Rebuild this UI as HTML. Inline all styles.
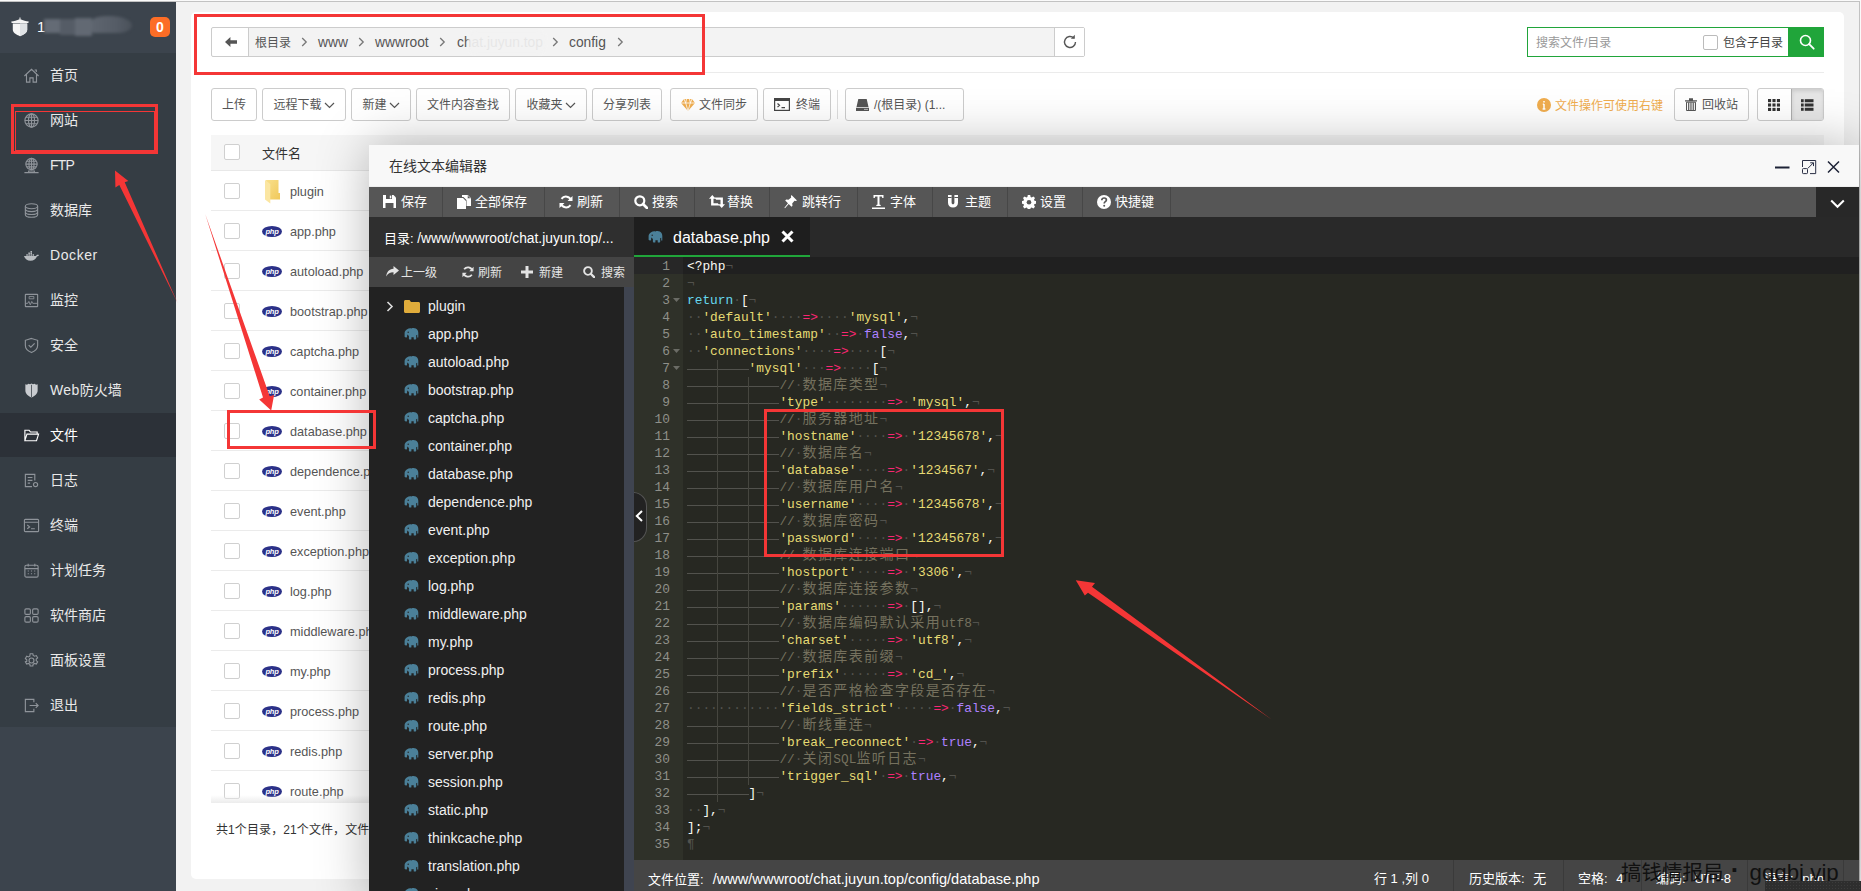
<!DOCTYPE html>
<html lang="zh-CN">
<head>
<meta charset="utf-8">
<title>文件管理</title>
<style>

*{box-sizing:border-box;margin:0;padding:0}
html,body{width:1861px;height:891px;overflow:hidden}
body{position:relative;background:#f2f2f2;font-family:"Liberation Sans","Noto Sans CJK SC",sans-serif;font-size:12px;color:#555;line-height:1}
.abs{position:absolute}
svg{display:block}
#topline{left:0;top:0;width:1861px;height:2px;background:linear-gradient(#fafafa 0,#fafafa 50%,#c2c2c2 50%,#c2c2c2 100%)}
#rightline{left:1859px;top:1px;width:2px;height:890px;background:linear-gradient(90deg,#c2c2c2 0,#c2c2c2 50%,#fafafa 50%,#fafafa 100%)}
/* sidebar */
#side{left:0;top:2px;width:176px;height:889px;background:#3c444d}
#side .hd{position:absolute;left:0;top:0;width:176px;height:50px}
#side .menu{position:absolute;left:0;top:50px;width:176px;height:675px;background:linear-gradient(transparent 1px,#353d44 1px)}
#side .mi{position:relative;height:45px;color:#e9e9e9;font-size:14px}
#side .mi.act{background:linear-gradient(transparent 1px,#2c3138 1px);color:#fff}
#side .mi span{position:absolute;left:50px;top:15px;line-height:17px;white-space:nowrap}
#side .mi svg{position:absolute;left:23px;top:14.500px;width:17px;height:17px;fill:none;stroke:#8f949a;stroke-width:1.2}
#side .mi.act svg{stroke:#fff}
.badge{left:150px;top:15px;width:20px;height:20px;border-radius:5px;background:#fc6d26;color:#fff;font-weight:bold;font-size:14px;text-align:center;line-height:20px}
/* main panel */
#panel{left:191px;top:12px;width:1653px;height:867px;background:#fff;border-radius:5px}
.pathbar{left:211px;top:27px;width:874px;height:30px;border:1px solid #ccc;border-radius:2px;background:#f3f3f3}
.pathbar .back{position:absolute;left:0;top:0;width:37px;height:28px;background:#fff;border-right:1px solid #ccc;border-radius:2px 0 0 2px}
.pathbar .refresh{position:absolute;right:0;top:0;width:30px;height:28px;background:#fff;border-left:1px solid #ccc}
.crumb{position:absolute;top:0;height:28px;line-height:30px;font-size:13.8px;color:#555;white-space:nowrap}
.crumb.cj{font-size:12px}
.sep{position:absolute;top:9px;width:7px;height:10px}
.btn{position:absolute;top:88px;height:33px;border:1px solid #ccc;border-radius:3px;background:#fff;color:#555;font-size:12px;line-height:33px;text-align:center;white-space:nowrap}
.btn svg{display:inline-block;vertical-align:middle}
.search{left:1527px;top:27px;width:297px;height:30px;border:1px solid #20a53a;background:#fff}
.search .ph{position:absolute;left:8px;top:0;line-height:30px;color:#999;font-size:12px}
.search .cb{position:absolute;left:175px;top:7px;width:15px;height:15px;border:1px solid #bbb;border-radius:2px;background:#fff}
.search .lb{position:absolute;left:195px;top:0;line-height:30px;color:#444;font-size:12px}
.search .go{position:absolute;right:-1px;top:-1px;width:36px;height:30px;background:#20a53a}
.hline{left:211px;top:72px;width:1613px;height:1px;background:#ebebeb}
/* file table */
.thead{left:211px;top:135px;width:1613px;height:36px;background:#f6f6f6;border-bottom:1px solid #e8e8e8}
.chk{position:absolute;left:13px;width:16px;height:16px;border:1px solid #d0d0d0;border-radius:2px;background:#fff}
.row{position:absolute;left:211px;width:1613px;height:40px;border-bottom:1px solid #ebebeb}
.row .chk{top:12px}
.row .nm{position:absolute;left:79px;top:0;line-height:42px;font-size:12.7px;color:#555;white-space:nowrap}
.row svg{position:absolute;left:51px}


#dlg{left:369px;top:145px;width:1490px;height:760px;background:#272822;box-shadow:1px 1px 50px rgba(0,0,0,.3)}
#dlg .title{position:absolute;left:0;top:0;width:1490px;height:42px;background:#f8f8f8;border-bottom:1px solid #eee;color:#333;font-size:14px;line-height:42px;padding-left:20px}
#dlg .tb{position:absolute;left:0;top:42px;width:1490px;height:30px;background:#282828}
#dlg .tb .in{position:absolute;left:0;top:0;width:1447px;height:30px;background:#565656}
.tbi{position:absolute;top:0;height:30px;border-right:1px solid #474747;color:#fff;font-size:13px;line-height:30px;white-space:nowrap}
.tbi svg{position:absolute;top:8px;fill:#fff}
.tbi span{position:absolute;top:0}
#tree{left:0;top:72px;width:265px;height:700px;background:#222}
#tree .dir{position:absolute;left:0;top:0;width:265px;height:40px;background:#2f2f2f;color:#fff;font-size:13px;line-height:43px;padding-left:15px;white-space:nowrap}
#tree .tt{position:absolute;left:0;top:40px;width:265px;height:30px;background:#444;color:#e4e4e4;font-size:12px;line-height:32px}
#tree .tt span{position:absolute;top:0}
#tree .tt svg{position:absolute;fill:#e4e4e4}
#tree .sb{position:absolute;left:255px;top:70px;width:10px;height:640px;background:#3f4450}
.ti{position:absolute;left:0;width:255px;height:28px;color:#f0f0f0;font-size:14px;line-height:28px;white-space:nowrap}
.ti span{position:absolute;left:59px;top:0}
.ti svg{position:absolute;left:35px;top:7px}
#tabs{left:265px;top:72px;width:1225px;height:40px;background:#292929}
#tabs .tab{position:absolute;left:0;top:0;width:176px;height:40px;background:#1e1e1e;border-bottom:2px solid #20a53a;color:#fff;font-size:16px;line-height:41px}
#code{left:265px;top:112px;width:1225px;height:603px;background:#272822;overflow:hidden;font-family:"Liberation Mono","Noto Sans CJK SC",monospace;font-size:12.8312px;line-height:17px;color:#f8f8f2}
#code .gut{position:absolute;left:0;top:0;width:49px;height:603px;background:#2f3129}
#code .al{position:absolute;left:0;top:0;width:1225px;height:17px;background:#202020}
#code .gal{position:absolute;left:0;top:0;width:49px;height:17px;background:#272727}
.ln{margin-top:1px;position:absolute;left:0;width:36px;text-align:right;color:#8f908a;height:17px;white-space:pre}
.fold{position:absolute;left:39px;width:7px;height:4px}
.cl{margin-top:1px;position:absolute;left:53px;height:17px;white-space:pre}
.cl i{font-style:normal;color:#52524d}
.cl .s{color:#e6db74}.cl .k{color:#f92672}.cl .r{color:#66d9ef}.cl .b{color:#ae81ff}.cl .c{color:#75715e}
.cl .cj{font-size:14px;letter-spacing:1.4px;color:#75715e}
.cl u{text-decoration:none;display:inline-block;height:17px;vertical-align:top;background:linear-gradient(#52524d,#52524d) 0 9px/100% 1px no-repeat}
.cl u.g{box-shadow:inset -1px 0 0 #46463f}
.cl b{font-weight:normal;display:inline-block;height:17px;vertical-align:top;color:#52524d}
.cl b.g{box-shadow:inset -1px 0 0 #46463f}
#status{left:265px;top:715px;width:1225px;height:40px;background:#454545;color:#fff;font-size:13px;line-height:38px;white-space:nowrap}
#status .it{position:absolute;top:0;height:31px}
#status .sp{position:absolute;top:0;width:1px;height:31px;background:#3a3a3a}

</style>
</head>
<body>
<div class="abs" id="panel"></div>
<div class="abs pathbar">
<div class="back"><svg class="abs" style="left:12.500px;top:9px" width="12.500" height="10" viewBox="0 0 15 12"><path d="M0 6l6.500-6v4H14.500v4H6.500v4z" fill="#555"/></svg></div>
<div class="crumb cj" style="left:43px">根目录</div>
<svg class="sep" style="left:89px" viewBox="0 0 7 10"><path d="M1.200 1l4 4-4 4" fill="none" stroke="#777" stroke-width="1.300"/></svg>
<div class="crumb " style="left:106px">www</div>
<svg class="sep" style="left:146px" viewBox="0 0 7 10"><path d="M1.200 1l4 4-4 4" fill="none" stroke="#777" stroke-width="1.300"/></svg>
<div class="crumb " style="left:163px">wwwroot</div>
<svg class="sep" style="left:227px" viewBox="0 0 7 10"><path d="M1.200 1l4 4-4 4" fill="none" stroke="#777" stroke-width="1.300"/></svg>
<div class="crumb " style="left:245px">chat.juyun.top</div>
<div class="abs" style="left:258px;top:5px;width:74px;height:19px;background:#f3f3f3;opacity:.92;border-radius:6px;box-shadow:0 0 3px 2px #f3f3f3"></div>
<svg class="sep" style="left:340px" viewBox="0 0 7 10"><path d="M1.200 1l4 4-4 4" fill="none" stroke="#777" stroke-width="1.300"/></svg>
<div class="crumb " style="left:357px">config</div>
<svg class="sep" style="left:405px" viewBox="0 0 7 10"><path d="M1.200 1l4 4-4 4" fill="none" stroke="#777" stroke-width="1.300"/></svg>
<div class="refresh"><svg class="abs" style="left:7px;top:6px" width="16" height="16" viewBox="0 0 16 16"><path d="M13.500 8a5.500 5.500 0 1 1-1.700-4" fill="none" stroke="#555" stroke-width="1.400"/><path d="M12.800 .8v4h-4z" fill="#555"/></svg></div>
</div>
<div class="abs search"><div class="ph">搜索文件/目录</div><div class="cb"></div><div class="lb">包含子目录</div><div class="go"><svg class="abs" style="left:11px;top:7px" width="16" height="16" viewBox="0 0 16 16"><circle cx="6.500" cy="6.500" r="5" fill="none" stroke="#fff" stroke-width="1.600"/><path d="M10.200 10.200l4.500 4.500" stroke="#fff" stroke-width="1.800" stroke-linecap="round"/></svg></div></div>
<div class="abs hline"></div>
<div class="btn" style="left:211px;width:46px;">上传</div>
<div class="btn" style="left:262px;width:84px;">远程下载<svg width="11" height="7" viewBox="0 0 11 7" style="margin-left:2px"><path d="M1 1l4.500 4.500L10 1" fill="none" stroke="#555" stroke-width="1.200"/></svg></div>
<div class="btn" style="left:351px;width:60px;">新建<svg width="11" height="7" viewBox="0 0 11 7" style="margin-left:2px"><path d="M1 1l4.500 4.500L10 1" fill="none" stroke="#555" stroke-width="1.200"/></svg></div>
<div class="btn" style="left:416px;width:94px;">文件内容查找</div>
<div class="btn" style="left:515px;width:72px;">收藏夹<svg width="11" height="7" viewBox="0 0 11 7" style="margin-left:2px"><path d="M1 1l4.500 4.500L10 1" fill="none" stroke="#555" stroke-width="1.200"/></svg></div>
<div class="btn" style="left:592px;width:70px;">分享列表</div>
<div class="btn" style="left:670px;width:88px;"><svg width="14" height="12" viewBox="0 0 14 12" style="margin-right:4px;margin-top:-2px"><path d="M3 0h8l3 4-7 8-7-8z" fill="#f0ad4e"/><path d="M0 4h14M3 0l1.700 4L7 12l2.300-8L11 0M5.500 0L4.700 4M8.500 0l.8 4" stroke="#fff" stroke-width=".8" fill="none"/></svg>文件同步</div>
<div class="btn" style="left:763px;width:68px;"><svg width="16" height="13" viewBox="0 0 16 13" style="margin-right:6px;margin-top:-2px"><rect x=".6" y=".6" width="14.800" height="11.800" fill="none" stroke="#444" stroke-width="1.200"/><path d="M.6 0h14.800v3H.6z" fill="#444"/><path d="M3.500 5.500l2 1.800-2 1.800M7.500 9.700h3.500" fill="none" stroke="#444" stroke-width="1.200"/></svg>终端</div>
<div class="abs" style="left:837px;top:90px;width:1px;height:29px;background:#ddd"></div>
<div class="btn" style="left:845px;width:119px;text-align:left;padding-left:10px"><svg width="13" height="12" viewBox="0 0 13 12" style="margin-right:5px;margin-top:-2px"><path d="M2.300 0h8.400l1.800 8H.5zM0 8.800h13V12H0z" fill="#555"/><circle cx="9" cy="10.400" r=".6" fill="#fff"/><circle cx="11" cy="10.400" r=".6" fill="#fff"/></svg>/(根目录) (1...</div>
<svg class="abs" style="left:1537px;top:98px" width="14" height="14" viewBox="0 0 14 14"><circle cx="7" cy="7" r="7" fill="#f0ad4e"/><path d="M7 3v1.600M7 6v5M5.800 6.200H7M5.600 11h2.800" stroke="#fff" stroke-width="1.500"/></svg>
<div class="abs" style="left:1555px;top:98px;line-height:17px;font-size:12px;color:#f0ad4e;white-space:nowrap">文件操作可使用右键</div>
<div class="btn" style="left:1674px;width:75px;"><svg width="12" height="13" viewBox="0 0 12 13" style="margin-right:5px;margin-top:-3px"><path d="M0 2.200h12v1.200H0zM4 .3h4v1.900H4z" fill="#555"/><path d="M1.500 4.200h9v8.300h-9z" fill="none" stroke="#555" stroke-width="1"/><path d="M3.500 4.500v7.500M5.200 4.500v7.500M6.900 4.500v7.500M8.600 4.500v7.500" stroke="#555" stroke-width=".9"/></svg>回收站</div>
<div class="btn" style="left:1757px;width:67px;overflow:hidden"><div class="abs" style="left:33px;top:0;width:33px;height:31px;background:#e6e6e6;border-left:1px solid #adadad;box-shadow:inset 0 2px 4px rgba(0,0,0,.12)"></div><svg class="abs" style="left:10px;top:10px" width="12" height="12" viewBox="0 0 13 13" fill="#333"><rect x="0" y="0" width="3.400" height="3.400"/><rect x="4.800" y="0" width="3.400" height="3.400"/><rect x="9.600" y="0" width="3.400" height="3.400"/><rect x="0" y="4.800" width="3.400" height="3.400"/><rect x="4.800" y="4.800" width="3.400" height="3.400"/><rect x="9.600" y="4.800" width="3.400" height="3.400"/><rect x="0" y="9.600" width="3.400" height="3.400"/><rect x="4.800" y="9.600" width="3.400" height="3.400"/><rect x="9.600" y="9.600" width="3.400" height="3.400"/></svg><svg class="abs" style="left:43px;top:10px" width="12.500" height="12" viewBox="0 0 14 13" fill="#333"><rect x="0" y="0" width="3" height="3.400"/><rect x="4.200" y="0" width="9.800" height="3.400"/><rect x="0" y="4.800" width="3" height="3.400"/><rect x="4.200" y="4.800" width="9.800" height="3.400"/><rect x="0" y="9.600" width="3" height="3.400"/><rect x="4.200" y="9.600" width="9.800" height="3.400"/></svg></div>
<div class="abs thead"><div class="chk" style="top:9px"></div><div class="abs" style="left:51px;top:0;line-height:37px;font-size:13px;color:#333">文件名</div></div>
<div class="abs" style="left:0;top:171px;width:1861px;height:632px;overflow:hidden">
<div class="row" style="top:0px"><div class="chk"></div><svg style="top:9px;left:53.500px" width="16" height="24" viewBox="0 0 16 24"><defs><linearGradient id="fg" x1="0" y1="0" x2="1" y2="1"><stop offset="0" stop-color="#f9e08c"/><stop offset="1" stop-color="#f0c85a"/></linearGradient></defs><path d="M1 0h12.500v13H15v6.600H4z" fill="url(#fg)"/><path d="M0 0l5.300 3.900v19.600L0 19.600z" fill="#fbe6a2"/></svg><div class="nm">plugin</div></div>
<div class="row" style="top:40px"><div class="chk"></div><svg style="top:15px" width="20" height="11" viewBox="0 0 20 11"><ellipse cx="10" cy="5.500" rx="10" ry="5.500" fill="#2b3188"/><text x="10" y="8" text-anchor="middle" font-family="Liberation Sans,sans-serif" font-style="italic" font-weight="bold" font-size="7.500" fill="#fff" letter-spacing="-.3">php</text></svg><div class="nm">app.php</div></div>
<div class="row" style="top:80px"><div class="chk"></div><svg style="top:15px" width="20" height="11" viewBox="0 0 20 11"><ellipse cx="10" cy="5.500" rx="10" ry="5.500" fill="#2b3188"/><text x="10" y="8" text-anchor="middle" font-family="Liberation Sans,sans-serif" font-style="italic" font-weight="bold" font-size="7.500" fill="#fff" letter-spacing="-.3">php</text></svg><div class="nm">autoload.php</div></div>
<div class="row" style="top:120px"><div class="chk"></div><svg style="top:15px" width="20" height="11" viewBox="0 0 20 11"><ellipse cx="10" cy="5.500" rx="10" ry="5.500" fill="#2b3188"/><text x="10" y="8" text-anchor="middle" font-family="Liberation Sans,sans-serif" font-style="italic" font-weight="bold" font-size="7.500" fill="#fff" letter-spacing="-.3">php</text></svg><div class="nm">bootstrap.php</div></div>
<div class="row" style="top:160px"><div class="chk"></div><svg style="top:15px" width="20" height="11" viewBox="0 0 20 11"><ellipse cx="10" cy="5.500" rx="10" ry="5.500" fill="#2b3188"/><text x="10" y="8" text-anchor="middle" font-family="Liberation Sans,sans-serif" font-style="italic" font-weight="bold" font-size="7.500" fill="#fff" letter-spacing="-.3">php</text></svg><div class="nm">captcha.php</div></div>
<div class="row" style="top:200px"><div class="chk"></div><svg style="top:15px" width="20" height="11" viewBox="0 0 20 11"><ellipse cx="10" cy="5.500" rx="10" ry="5.500" fill="#2b3188"/><text x="10" y="8" text-anchor="middle" font-family="Liberation Sans,sans-serif" font-style="italic" font-weight="bold" font-size="7.500" fill="#fff" letter-spacing="-.3">php</text></svg><div class="nm">container.php</div></div>
<div class="row" style="top:240px"><div class="chk"></div><svg style="top:15px" width="20" height="11" viewBox="0 0 20 11"><ellipse cx="10" cy="5.500" rx="10" ry="5.500" fill="#2b3188"/><text x="10" y="8" text-anchor="middle" font-family="Liberation Sans,sans-serif" font-style="italic" font-weight="bold" font-size="7.500" fill="#fff" letter-spacing="-.3">php</text></svg><div class="nm">database.php</div></div>
<div class="row" style="top:280px"><div class="chk"></div><svg style="top:15px" width="20" height="11" viewBox="0 0 20 11"><ellipse cx="10" cy="5.500" rx="10" ry="5.500" fill="#2b3188"/><text x="10" y="8" text-anchor="middle" font-family="Liberation Sans,sans-serif" font-style="italic" font-weight="bold" font-size="7.500" fill="#fff" letter-spacing="-.3">php</text></svg><div class="nm">dependence.php</div></div>
<div class="row" style="top:320px"><div class="chk"></div><svg style="top:15px" width="20" height="11" viewBox="0 0 20 11"><ellipse cx="10" cy="5.500" rx="10" ry="5.500" fill="#2b3188"/><text x="10" y="8" text-anchor="middle" font-family="Liberation Sans,sans-serif" font-style="italic" font-weight="bold" font-size="7.500" fill="#fff" letter-spacing="-.3">php</text></svg><div class="nm">event.php</div></div>
<div class="row" style="top:360px"><div class="chk"></div><svg style="top:15px" width="20" height="11" viewBox="0 0 20 11"><ellipse cx="10" cy="5.500" rx="10" ry="5.500" fill="#2b3188"/><text x="10" y="8" text-anchor="middle" font-family="Liberation Sans,sans-serif" font-style="italic" font-weight="bold" font-size="7.500" fill="#fff" letter-spacing="-.3">php</text></svg><div class="nm">exception.php</div></div>
<div class="row" style="top:400px"><div class="chk"></div><svg style="top:15px" width="20" height="11" viewBox="0 0 20 11"><ellipse cx="10" cy="5.500" rx="10" ry="5.500" fill="#2b3188"/><text x="10" y="8" text-anchor="middle" font-family="Liberation Sans,sans-serif" font-style="italic" font-weight="bold" font-size="7.500" fill="#fff" letter-spacing="-.3">php</text></svg><div class="nm">log.php</div></div>
<div class="row" style="top:440px"><div class="chk"></div><svg style="top:15px" width="20" height="11" viewBox="0 0 20 11"><ellipse cx="10" cy="5.500" rx="10" ry="5.500" fill="#2b3188"/><text x="10" y="8" text-anchor="middle" font-family="Liberation Sans,sans-serif" font-style="italic" font-weight="bold" font-size="7.500" fill="#fff" letter-spacing="-.3">php</text></svg><div class="nm">middleware.php</div></div>
<div class="row" style="top:480px"><div class="chk"></div><svg style="top:15px" width="20" height="11" viewBox="0 0 20 11"><ellipse cx="10" cy="5.500" rx="10" ry="5.500" fill="#2b3188"/><text x="10" y="8" text-anchor="middle" font-family="Liberation Sans,sans-serif" font-style="italic" font-weight="bold" font-size="7.500" fill="#fff" letter-spacing="-.3">php</text></svg><div class="nm">my.php</div></div>
<div class="row" style="top:520px"><div class="chk"></div><svg style="top:15px" width="20" height="11" viewBox="0 0 20 11"><ellipse cx="10" cy="5.500" rx="10" ry="5.500" fill="#2b3188"/><text x="10" y="8" text-anchor="middle" font-family="Liberation Sans,sans-serif" font-style="italic" font-weight="bold" font-size="7.500" fill="#fff" letter-spacing="-.3">php</text></svg><div class="nm">process.php</div></div>
<div class="row" style="top:560px"><div class="chk"></div><svg style="top:15px" width="20" height="11" viewBox="0 0 20 11"><ellipse cx="10" cy="5.500" rx="10" ry="5.500" fill="#2b3188"/><text x="10" y="8" text-anchor="middle" font-family="Liberation Sans,sans-serif" font-style="italic" font-weight="bold" font-size="7.500" fill="#fff" letter-spacing="-.3">php</text></svg><div class="nm">redis.php</div></div>
<div class="row" style="top:600px"><div class="chk"></div><svg style="top:15px" width="20" height="11" viewBox="0 0 20 11"><ellipse cx="10" cy="5.500" rx="10" ry="5.500" fill="#2b3188"/><text x="10" y="8" text-anchor="middle" font-family="Liberation Sans,sans-serif" font-style="italic" font-weight="bold" font-size="7.500" fill="#fff" letter-spacing="-.3">php</text></svg><div class="nm">route.php</div></div>
<div class="abs" style="left:211px;top:624px;width:1613px;height:8px;background:linear-gradient(rgba(240,240,240,0),#ececec)"></div>
</div>
<div class="abs" style="left:216px;top:822px;line-height:17px;font-size:12px;color:#333;white-space:nowrap;letter-spacing:.1px">共1个目录，21个文件，文件大小：点击计算</div>
<div class="abs" id="topline"></div><div class="abs" id="rightline"></div>
<div class="abs" id="side">
  <div class="hd">
    <svg class="abs" style="left:11px;top:15px" width="18" height="20" viewBox="0 0 18 20"><path d="M9 0l.9 1.800h-1.800zM.3 4.600c2.500-.2 5.500-1.300 8.700-2.600 3.200 1.300 6.200 2.400 8.700 2.600l-.3 1.300H.6z" fill="#f4f4f4"/><path d="M1.800 6.600h14.400v6c0 3.300-3.400 5.300-7.200 6.600-3.800-1.300-7.200-3.300-7.200-6.600z" fill="#f6f6f6"/><path d="M9 6.600h7.200v6c0 3.300-3.400 5.300-7.200 6.600z" fill="#dfe2e5"/></svg>
    <div class="abs" style="left:37px;top:16px;font-size:15px;color:#fff;line-height:18px">1</div>
    <div class="abs" style="left:44px;top:14px;width:88px;height:22px;filter:blur(1.500px)"><div class="abs" style="left:0;top:3px;width:16px;height:14px;background:#646b75"></div><div class="abs" style="left:16px;top:3px;width:15px;height:16px;background:#555c66"></div><div class="abs" style="left:31px;top:2px;width:17px;height:18px;background:#626973"></div><div class="abs" style="left:48px;top:0;width:40px;height:17px;border-radius:22px 34px 22px 4px / 8px 14px 12px 4px;background:linear-gradient(90deg,#5e656f,#555c66 60%,#4a515a)"></div></div>
    <div class="abs badge">0</div>
  </div>
  <div class="menu">
<div class="mi"><svg viewBox="0 0 18 18"><path d="M1.5 9.500L9 2.500l7.500 7M3.700 8v8h3.600v-4.500h3.400V16h3.600V8M12.300 3.200h1.800v2"/></svg><span>首页</span></div>
<div class="mi"><svg viewBox="0 0 18 18"><circle cx="9" cy="9" r="7"/><ellipse cx="9" cy="9" rx="3.200" ry="7"/><path d="M2 9h14M3 5.500h12M3 12.500h12M9 2v14"/></svg><span>网站</span></div>
<div class="mi"><svg viewBox="0 0 18 18"><circle cx="9" cy="7.500" r="6"/><ellipse cx="9" cy="7.500" rx="2.700" ry="6"/><path d="M3 7.500h12M4 4.500h10M4 10.500h10M9 1.500v12M1.500 16.500h15M6 14.800h6v1.700H6z"/></svg><span><em style="font-style:normal;letter-spacing:-.8px">FTP</em></span></div>
<div class="mi"><svg viewBox="0 0 18 18"><ellipse cx="9" cy="4.500" rx="6.500" ry="2.700"/><path d="M2.500 4.500v9c0 1.500 2.900 2.700 6.500 2.700s6.500-1.200 6.500-2.700v-9M2.500 7.500c0 1.500 2.900 2.700 6.500 2.700s6.500-1.200 6.500-2.700M2.500 10.500c0 1.500 2.900 2.700 6.500 2.700s6.500-1.200 6.500-2.700"/></svg><span>数据库</span></div>
<div class="mi"><svg viewBox="0 0 18 18"><path d="M1 9.500h12.500c.6-.1 1-.5 1.200-1.200.6-.2 1.500-.1 2.300.3-.4.900-1.300 1.400-2.300 1.400-1 2.800-3.200 4.500-6.700 4.500-3.600 0-5.800-1.600-7-5z" fill="#b9bdc1" stroke="none"/><path d="M3.500 8.500h1.600M5.700 8.500h1.600M7.900 8.500h1.600M10.100 8.500h1.600M5.700 6.700h1.600M7.900 6.700h1.600M7.900 4.900h1.600" stroke="#b9bdc1" stroke-width="1.500"/></svg><span><em style="font-style:normal;letter-spacing:.58px">Docker</em></span></div>
<div class="mi"><svg viewBox="0 0 18 18"><rect x="2.500" y="2.500" width="13" height="13" rx=".5"/><path d="M2.500 12h2.500l1.200-2 1.500 3.500L9.300 10l1 2h5.200" stroke-width="1"/><path d="M6.500 4.800h5v2.400h-5z" stroke-width=".9"/></svg><span>监控</span></div>
<div class="mi"><svg viewBox="0 0 18 18"><path d="M9 1.500l6.500 2v5.500c0 3.500-3 6-6.500 7.500C5.500 15 2.500 12.500 2.500 9V3.500z"/><path d="M6 8.500l2.300 2.300L12.300 6.800"/></svg><span>安全</span></div>
<div class="mi"><svg viewBox="0 0 18 18"><path d="M9 1.500l1.600 1 1.700-.7 1.500 1 1.700-.3V9c0 3.500-3 6-6.500 7.500C5.500 15 2.500 12.500 2.500 9V2.500l1.700.3 1.500-1 1.700.7z" fill="#c9ccd0" stroke="none"/><path d="M9 3v13" stroke="#353d44" stroke-width=".8"/></svg><span><em style="font-style:normal;letter-spacing:.4px">Web</em>防火墙</span></div>
<div class="mi act"><svg viewBox="0 0 18 18"><path d="M2 14.500V3.500h4.500l1.500 1.800h7V7.500M2 14.500l2.200-7h12.300l-2.200 7z"/></svg><span>文件</span></div>
<div class="mi"><svg viewBox="0 0 18 18"><path d="M12.500 9V2.500h-10v13h7M5 5.800h5M5 8.800h5M5 11.800h2.500"/><circle cx="13.300" cy="13.300" r="2.200"/></svg><span>日志</span></div>
<div class="mi"><svg viewBox="0 0 18 18"><rect x="1.500" y="2.500" width="15" height="13" rx="1"/><path d="M1.500 5.500h15M4.500 8.500l2.500 2-2.500 2M8.500 12.500h4"/></svg><span>终端</span></div>
<div class="mi"><svg viewBox="0 0 18 18"><rect x="2" y="3.500" width="14" height="12.500" rx="1.500"/><path d="M2 7h14M5.500 1.800v3M12.500 1.800v3M5 9.500h1.200M8.400 9.500h1.200M11.800 9.500h1.200M5 12.500h1.200M8.400 12.500h1.200M11.800 12.500h1.200"/></svg><span>计划任务</span></div>
<div class="mi"><svg viewBox="0 0 18 18"><rect x="2" y="2" width="5.800" height="5.800" rx="1.300"/><rect x="10.200" y="2" width="5.800" height="5.800" rx="1.300"/><rect x="2" y="10.200" width="5.800" height="5.800" rx="1.300"/><rect x="10.200" y="10.200" width="5.800" height="5.800" rx="1.300"/></svg><span>软件商店</span></div>
<div class="mi"><svg viewBox="0 0 18 18"><circle cx="9" cy="9" r="2.600"/><path d="M7.600 1.800h2.800l.4 1.900 1.400.8 1.900-.7 1.400 2.400-1.500 1.300v1.600l1.500 1.300-1.400 2.400-1.900-.7-1.400.8-.4 1.900H7.600l-.4-1.900-1.400-.8-1.900.7-1.400-2.400L4 9.800V8.200L2.500 6.900l1.400-2.400 1.900.7 1.400-.8z"/></svg><span>面板设置</span></div>
<div class="mi"><svg viewBox="0 0 18 18"><path d="M11.500 5.500V2.500h-9v13h9v-3M7 9h9M13.500 6.500L16 9l-2.500 2.500"/></svg><span>退出</span></div>
  </div>
</div>
<div class="abs" id="dlg">
<div class="title">在线文本编辑器</div>
<svg class="abs" style="left:1406px;top:14px" width="68" height="16" viewBox="0 0 68 16"><path d="M0 8.500h14.500" stroke="#1d2236" stroke-width="2"/><path d="M27.500 8V1.500h13.200v13.100H35" fill="none" stroke="#2a2f45" stroke-width="1"/><rect x="27.500" y="9.600" width="5" height="5" rx=".8" fill="none" stroke="#2a2f45" stroke-width="1"/><path d="M32.800 9.400l5.600-5.600M35.200 3.800h3.300v3.300" fill="none" stroke="#2a2f45" stroke-width="1"/><path d="M53 2.500l11 11M64 2.500l-11 11" stroke="#1d2236" stroke-width="1.500"/></svg>
<div class="tb"><div class="in"></div>
<div class="tbi" style="left:0px;width:74px"><svg style="left:14px" width="13" height="13" viewBox="0 0 13 13"><path d="M0 0h10.500L13 2.500V13H0z"/><path d="M3 0h6v4H3z" fill="#565656"/><path d="M6.800 .6h1.500v2.800H6.800z"/><path d="M2.500 8h8v5h-8z" fill="#565656"/></svg><span style="left:32px">保存</span></div>
<div class="tbi" style="left:74px;width:102px"><svg style="left:14px" width="14" height="14" viewBox="0 0 14 14"><path d="M5 0h5.500L14 3.500V11H9.500V5L6.500 2H5zM0 3h6l3 3v8H0z"/><path d="M10.500 0v3.500H14z" fill="#565656" stroke="#fff" stroke-width=".5"/></svg><span style="left:32px">全部保存</span></div>
<div class="tbi" style="left:176px;width:75px"><svg style="left:14px" width="14" height="14" viewBox="0 0 14 14"><path d="M12.200 5.500A5.500 5.500 0 0 0 2.500 3.800M1.800 8.500a5.500 5.500 0 0 0 9.700 1.700" fill="none" stroke="#fff" stroke-width="2"/><path d="M13.500 1v5h-5zM.5 13V8h5z"/></svg><span style="left:32px">刷新</span></div>
<div class="tbi" style="left:251px;width:75px"><svg style="left:14px" width="14" height="14" viewBox="0 0 14 14"><circle cx="5.800" cy="5.800" r="4.500" fill="none" stroke="#fff" stroke-width="2.200"/><path d="M9 9l4 4" stroke="#fff" stroke-width="2.600" stroke-linecap="round"/></svg><span style="left:32px">搜索</span></div>
<div class="tbi" style="left:326px;width:75px"><svg style="left:14px" width="16" height="13" viewBox="0 0 16 13"><path d="M3.300 0L6.600 3.800H4.500v4.400h4.300l1.900 2.300H2.100V3.800H0zM12.700 13L9.400 9.200h2.100V4.800H7.200L5.300 2.500h8.600v6.700H16z"/></svg><span style="left:32px">替换</span></div>
<div class="tbi" style="left:401px;width:88px"><svg style="left:14px" width="13" height="14" viewBox="0 0 13 14"><path d="M7.500 0L13 5.500l-1.200.6-1.300-.3-2.300 2.700.3 2.300-1 1L4.700 9 1 13.200l-.6-.5L4 8.300 1.200 5.500l1-1 2.300.3L7.200 2.500 6.900 1.200z"/></svg><span style="left:32px">跳转行</span></div>
<div class="tbi" style="left:489px;width:75px"><svg style="left:14px" width="13" height="14" viewBox="0 0 13 14"><path d="M1.500 0h10v3h-1.200l-.5-1.400H7.500v8l1.200.4v1h-4.400v-1l1.200-.4v-8H3.200L2.700 3H1.500zM0 12.500h13V14H0z"/></svg><span style="left:32px">字体</span></div>
<div class="tbi" style="left:564px;width:75px"><svg style="left:14px" width="12" height="14" viewBox="0 0 12 14"><path d="M1 0h3.600v7.500c0 1.200.6 1.800 1.400 1.800s1.400-.6 1.400-1.800V0H11v7.800c0 3-2 4.700-5 4.700S1 10.800 1 7.800z"/><path d="M1 2.500h3.600M7.400 2.500H11" stroke="#565656" stroke-width="1"/></svg><span style="left:32px">主题</span></div>
<div class="tbi" style="left:639px;width:75px"><svg style="left:14px" width="14" height="14" viewBox="0 0 14 14"><path d="M5.800 0h2.400l.4 1.900 1.100.5 1.700-1 1.600 1.600-1 1.700.5 1.100 1.900.4v2.400l-1.900.4-.5 1.100 1 1.700-1.600 1.600-1.700-1-1.100.5-.4 1.900H5.800l-.4-1.900-1.100-.5-1.700 1L1 11.800l1-1.700-.5-1.100L-.4 8.600V6.200l1.900-.4.5-1.100-1-1.700L2.600 1.400l1.700 1 1.100-.5z"/><circle cx="7" cy="7.300" r="2.300" fill="#565656"/></svg><span style="left:32px">设置</span></div>
<div class="tbi" style="left:714px;width:88px"><svg style="left:14px" width="14" height="14" viewBox="0 0 14 14"><circle cx="7" cy="7" r="7"/><path d="M4.800 5.300C4.800 3.900 5.800 3 7.100 3s2.300.8 2.300 2c0 1.700-2.200 1.700-2.200 3.400" fill="none" stroke="#565656" stroke-width="1.700"/><circle cx="7.200" cy="10.700" r="1" fill="#565656"/></svg><span style="left:32px">快捷键</span></div>
<svg class="abs" style="left:1461px;top:12px" width="15" height="10" viewBox="0 0 15 10"><path d="M1.200 1.500l6.300 6.300 6.300-6.300" fill="none" stroke="#fff" stroke-width="2"/></svg>
</div>
<div class="abs" id="tree">
<div class="dir">目录: <span style="font-size:13.8px">/www/wwwroot/chat.juyun.top/...</span></div>
<div class="tt"><svg style="left:17px;top:9px" width="13" height="12" viewBox="0 0 13 12"><path d="M7.500 0L13 4.500 7.500 9V6.200C4 6.200 1.800 7.500.3 10.500.5 6 3 3.200 7.500 2.800z"/></svg><span style="left:32px">上一级</span><svg style="left:93px;top:9px" width="12" height="12" viewBox="0 0 14 14"><path d="M12.200 5.500A5.500 5.500 0 0 0 2.500 3.800M1.800 8.500a5.500 5.500 0 0 0 9.700 1.700" fill="none" stroke="#e4e4e4" stroke-width="2"/><path d="M13.500 1v5h-5zM.5 13V8h5z"/></svg><span style="left:109px">刷新</span><svg style="left:152px;top:9px" width="12" height="12" viewBox="0 0 12 12"><path d="M4.500 0h3v4.500H12v3H7.500V12h-3V7.500H0v-3h4.500z"/></svg><span style="left:170px">新建</span><svg style="left:214px;top:9px" width="12" height="12" viewBox="0 0 14 14"><circle cx="5.800" cy="5.800" r="4.500" fill="none" stroke="#e4e4e4" stroke-width="2.200"/><path d="M9 9l4 4" stroke="#e4e4e4" stroke-width="2.600" stroke-linecap="round"/></svg><span style="left:232px">搜索</span></div>
<div class="ti" style="top:75px"><svg style="left:17px;top:9px" width="8" height="11" viewBox="0 0 8 11"><path d="M1.500 1l4.500 4.500L1.500 10" fill="none" stroke="#ddd" stroke-width="1.600"/></svg><svg style="top:8px" width="16" height="13" viewBox="0 0 16 13"><path d="M0 1.500C0 .7.700 0 1.500 0h4l1.500 2h7.500c.8 0 1.500.7 1.500 1.500v8c0 .8-.7 1.500-1.500 1.500h-13C.7 13 0 12.300 0 11.500z" fill="#e0ac3b"/></svg><span>plugin</span></div>
<div class="ti" style="top:103px"><svg style="top:8px" width="15" height="12" viewBox="0 0 15 12"><path d="M3.200 1.200C4.300.3 6 .1 7.500.4c1.300-.5 3-.5 4.300.2 1.600.8 2.500 2.500 2.500 4.300v4.600h-1.100V6.800c-.3.300-.7.400-1 .400v3.300c0 .6-.4 1-1 1h-.9c-.3 0-.6-.3-.6-.6V9.200c-.7.200-1.600.2-2.300 0v1.700c0 .3-.3.600-.6.600h-.9c-.6 0-1-.4-1-1V7.800c-.9-.2-1.500-.8-1.800-1.500v2.500c0 .5-.3.800-.7.800S.6 9.300.6 8.800V5.200c0-1.700 1-3.200 2.600-4z" fill="#4b8099"/><circle cx="4.200" cy="4.200" r=".7" fill="#222"/></svg><span>app.php</span></div>
<div class="ti" style="top:131px"><svg style="top:8px" width="15" height="12" viewBox="0 0 15 12"><path d="M3.200 1.200C4.300.3 6 .1 7.500.4c1.300-.5 3-.5 4.300.2 1.600.8 2.500 2.500 2.500 4.300v4.600h-1.100V6.800c-.3.300-.7.400-1 .400v3.300c0 .6-.4 1-1 1h-.9c-.3 0-.6-.3-.6-.6V9.200c-.7.200-1.600.2-2.300 0v1.700c0 .3-.3.600-.6.600h-.9c-.6 0-1-.4-1-1V7.800c-.9-.2-1.500-.8-1.800-1.500v2.500c0 .5-.3.800-.7.800S.6 9.300.6 8.800V5.200c0-1.700 1-3.200 2.600-4z" fill="#4b8099"/><circle cx="4.200" cy="4.200" r=".7" fill="#222"/></svg><span>autoload.php</span></div>
<div class="ti" style="top:159px"><svg style="top:8px" width="15" height="12" viewBox="0 0 15 12"><path d="M3.200 1.200C4.300.3 6 .1 7.500.4c1.300-.5 3-.5 4.300.2 1.600.8 2.500 2.500 2.500 4.300v4.600h-1.100V6.800c-.3.300-.7.400-1 .400v3.300c0 .6-.4 1-1 1h-.9c-.3 0-.6-.3-.6-.6V9.200c-.7.200-1.600.2-2.300 0v1.700c0 .3-.3.600-.6.600h-.9c-.6 0-1-.4-1-1V7.800c-.9-.2-1.500-.8-1.800-1.500v2.500c0 .5-.3.800-.7.800S.6 9.300.6 8.800V5.200c0-1.700 1-3.200 2.600-4z" fill="#4b8099"/><circle cx="4.200" cy="4.200" r=".7" fill="#222"/></svg><span>bootstrap.php</span></div>
<div class="ti" style="top:187px"><svg style="top:8px" width="15" height="12" viewBox="0 0 15 12"><path d="M3.200 1.200C4.300.3 6 .1 7.500.4c1.300-.5 3-.5 4.300.2 1.600.8 2.500 2.500 2.500 4.300v4.600h-1.100V6.800c-.3.300-.7.400-1 .400v3.300c0 .6-.4 1-1 1h-.9c-.3 0-.6-.3-.6-.6V9.200c-.7.200-1.600.2-2.300 0v1.700c0 .3-.3.600-.6.600h-.9c-.6 0-1-.4-1-1V7.800c-.9-.2-1.500-.8-1.800-1.500v2.500c0 .5-.3.800-.7.800S.6 9.300.6 8.800V5.200c0-1.700 1-3.200 2.600-4z" fill="#4b8099"/><circle cx="4.200" cy="4.200" r=".7" fill="#222"/></svg><span>captcha.php</span></div>
<div class="ti" style="top:215px"><svg style="top:8px" width="15" height="12" viewBox="0 0 15 12"><path d="M3.200 1.200C4.300.3 6 .1 7.500.4c1.300-.5 3-.5 4.300.2 1.600.8 2.500 2.500 2.500 4.300v4.600h-1.100V6.800c-.3.300-.7.400-1 .400v3.300c0 .6-.4 1-1 1h-.9c-.3 0-.6-.3-.6-.6V9.200c-.7.200-1.600.2-2.300 0v1.700c0 .3-.3.600-.6.600h-.9c-.6 0-1-.4-1-1V7.800c-.9-.2-1.500-.8-1.800-1.500v2.500c0 .5-.3.800-.7.800S.6 9.300.6 8.800V5.200c0-1.700 1-3.200 2.600-4z" fill="#4b8099"/><circle cx="4.200" cy="4.200" r=".7" fill="#222"/></svg><span>container.php</span></div>
<div class="ti" style="top:243px"><svg style="top:8px" width="15" height="12" viewBox="0 0 15 12"><path d="M3.200 1.200C4.300.3 6 .1 7.500.4c1.300-.5 3-.5 4.300.2 1.600.8 2.500 2.500 2.500 4.300v4.600h-1.100V6.800c-.3.300-.7.400-1 .400v3.300c0 .6-.4 1-1 1h-.9c-.3 0-.6-.3-.6-.6V9.200c-.7.200-1.600.2-2.300 0v1.700c0 .3-.3.600-.6.600h-.9c-.6 0-1-.4-1-1V7.800c-.9-.2-1.500-.8-1.800-1.500v2.500c0 .5-.3.800-.7.800S.6 9.300.6 8.800V5.200c0-1.700 1-3.200 2.600-4z" fill="#4b8099"/><circle cx="4.200" cy="4.200" r=".7" fill="#222"/></svg><span>database.php</span></div>
<div class="ti" style="top:271px"><svg style="top:8px" width="15" height="12" viewBox="0 0 15 12"><path d="M3.200 1.200C4.300.3 6 .1 7.500.4c1.300-.5 3-.5 4.300.2 1.600.8 2.500 2.500 2.500 4.300v4.600h-1.100V6.800c-.3.300-.7.400-1 .400v3.300c0 .6-.4 1-1 1h-.9c-.3 0-.6-.3-.6-.6V9.200c-.7.200-1.600.2-2.300 0v1.700c0 .3-.3.600-.6.600h-.9c-.6 0-1-.4-1-1V7.800c-.9-.2-1.500-.8-1.800-1.500v2.500c0 .5-.3.800-.7.800S.6 9.300.6 8.800V5.200c0-1.700 1-3.200 2.600-4z" fill="#4b8099"/><circle cx="4.200" cy="4.200" r=".7" fill="#222"/></svg><span>dependence.php</span></div>
<div class="ti" style="top:299px"><svg style="top:8px" width="15" height="12" viewBox="0 0 15 12"><path d="M3.200 1.200C4.300.3 6 .1 7.500.4c1.300-.5 3-.5 4.300.2 1.600.8 2.500 2.500 2.500 4.300v4.600h-1.100V6.800c-.3.300-.7.400-1 .400v3.300c0 .6-.4 1-1 1h-.9c-.3 0-.6-.3-.6-.6V9.200c-.7.200-1.600.2-2.300 0v1.700c0 .3-.3.600-.6.600h-.9c-.6 0-1-.4-1-1V7.800c-.9-.2-1.500-.8-1.800-1.500v2.500c0 .5-.3.800-.7.800S.6 9.300.6 8.800V5.200c0-1.700 1-3.200 2.600-4z" fill="#4b8099"/><circle cx="4.200" cy="4.200" r=".7" fill="#222"/></svg><span>event.php</span></div>
<div class="ti" style="top:327px"><svg style="top:8px" width="15" height="12" viewBox="0 0 15 12"><path d="M3.200 1.200C4.300.3 6 .1 7.500.4c1.300-.5 3-.5 4.300.2 1.600.8 2.500 2.500 2.500 4.300v4.600h-1.100V6.800c-.3.300-.7.400-1 .400v3.300c0 .6-.4 1-1 1h-.9c-.3 0-.6-.3-.6-.6V9.200c-.7.200-1.600.2-2.300 0v1.700c0 .3-.3.600-.6.600h-.9c-.6 0-1-.4-1-1V7.800c-.9-.2-1.500-.8-1.800-1.500v2.500c0 .5-.3.800-.7.800S.6 9.300.6 8.800V5.200c0-1.700 1-3.200 2.600-4z" fill="#4b8099"/><circle cx="4.200" cy="4.200" r=".7" fill="#222"/></svg><span>exception.php</span></div>
<div class="ti" style="top:355px"><svg style="top:8px" width="15" height="12" viewBox="0 0 15 12"><path d="M3.200 1.200C4.300.3 6 .1 7.500.4c1.300-.5 3-.5 4.300.2 1.600.8 2.500 2.500 2.500 4.300v4.600h-1.100V6.800c-.3.300-.7.400-1 .400v3.300c0 .6-.4 1-1 1h-.9c-.3 0-.6-.3-.6-.6V9.200c-.7.200-1.600.2-2.300 0v1.700c0 .3-.3.600-.6.600h-.9c-.6 0-1-.4-1-1V7.800c-.9-.2-1.500-.8-1.800-1.500v2.500c0 .5-.3.800-.7.800S.6 9.300.6 8.800V5.200c0-1.700 1-3.200 2.600-4z" fill="#4b8099"/><circle cx="4.200" cy="4.200" r=".7" fill="#222"/></svg><span>log.php</span></div>
<div class="ti" style="top:383px"><svg style="top:8px" width="15" height="12" viewBox="0 0 15 12"><path d="M3.200 1.200C4.300.3 6 .1 7.500.4c1.300-.5 3-.5 4.300.2 1.600.8 2.500 2.500 2.500 4.300v4.600h-1.100V6.800c-.3.300-.7.400-1 .400v3.300c0 .6-.4 1-1 1h-.9c-.3 0-.6-.3-.6-.6V9.200c-.7.200-1.600.2-2.300 0v1.700c0 .3-.3.600-.6.600h-.9c-.6 0-1-.4-1-1V7.800c-.9-.2-1.500-.8-1.800-1.500v2.500c0 .5-.3.800-.7.800S.6 9.300.6 8.800V5.200c0-1.700 1-3.200 2.600-4z" fill="#4b8099"/><circle cx="4.200" cy="4.200" r=".7" fill="#222"/></svg><span>middleware.php</span></div>
<div class="ti" style="top:411px"><svg style="top:8px" width="15" height="12" viewBox="0 0 15 12"><path d="M3.200 1.200C4.300.3 6 .1 7.500.4c1.300-.5 3-.5 4.300.2 1.600.8 2.500 2.500 2.500 4.300v4.600h-1.100V6.800c-.3.300-.7.400-1 .400v3.300c0 .6-.4 1-1 1h-.9c-.3 0-.6-.3-.6-.6V9.200c-.7.200-1.600.2-2.300 0v1.700c0 .3-.3.600-.6.600h-.9c-.6 0-1-.4-1-1V7.800c-.9-.2-1.500-.8-1.800-1.500v2.500c0 .5-.3.800-.7.800S.6 9.300.6 8.800V5.200c0-1.700 1-3.200 2.600-4z" fill="#4b8099"/><circle cx="4.200" cy="4.200" r=".7" fill="#222"/></svg><span>my.php</span></div>
<div class="ti" style="top:439px"><svg style="top:8px" width="15" height="12" viewBox="0 0 15 12"><path d="M3.200 1.200C4.300.3 6 .1 7.500.4c1.300-.5 3-.5 4.300.2 1.600.8 2.500 2.500 2.500 4.300v4.600h-1.100V6.800c-.3.300-.7.400-1 .400v3.300c0 .6-.4 1-1 1h-.9c-.3 0-.6-.3-.6-.6V9.200c-.7.200-1.600.2-2.300 0v1.700c0 .3-.3.600-.6.600h-.9c-.6 0-1-.4-1-1V7.800c-.9-.2-1.500-.8-1.800-1.500v2.500c0 .5-.3.800-.7.800S.6 9.300.6 8.800V5.200c0-1.700 1-3.200 2.600-4z" fill="#4b8099"/><circle cx="4.200" cy="4.200" r=".7" fill="#222"/></svg><span>process.php</span></div>
<div class="ti" style="top:467px"><svg style="top:8px" width="15" height="12" viewBox="0 0 15 12"><path d="M3.200 1.200C4.300.3 6 .1 7.500.4c1.300-.5 3-.5 4.300.2 1.600.8 2.500 2.500 2.500 4.300v4.600h-1.100V6.800c-.3.300-.7.400-1 .400v3.300c0 .6-.4 1-1 1h-.9c-.3 0-.6-.3-.6-.6V9.200c-.7.200-1.600.2-2.300 0v1.700c0 .3-.3.600-.6.600h-.9c-.6 0-1-.4-1-1V7.800c-.9-.2-1.500-.8-1.800-1.500v2.500c0 .5-.3.800-.7.800S.6 9.300.6 8.800V5.200c0-1.700 1-3.200 2.600-4z" fill="#4b8099"/><circle cx="4.200" cy="4.200" r=".7" fill="#222"/></svg><span>redis.php</span></div>
<div class="ti" style="top:495px"><svg style="top:8px" width="15" height="12" viewBox="0 0 15 12"><path d="M3.200 1.200C4.300.3 6 .1 7.500.4c1.300-.5 3-.5 4.300.2 1.600.8 2.500 2.500 2.500 4.300v4.600h-1.100V6.800c-.3.300-.7.400-1 .400v3.300c0 .6-.4 1-1 1h-.9c-.3 0-.6-.3-.6-.6V9.200c-.7.200-1.600.2-2.300 0v1.700c0 .3-.3.600-.6.600h-.9c-.6 0-1-.4-1-1V7.800c-.9-.2-1.500-.8-1.800-1.500v2.500c0 .5-.3.800-.7.800S.6 9.300.6 8.800V5.200c0-1.700 1-3.200 2.600-4z" fill="#4b8099"/><circle cx="4.200" cy="4.200" r=".7" fill="#222"/></svg><span>route.php</span></div>
<div class="ti" style="top:523px"><svg style="top:8px" width="15" height="12" viewBox="0 0 15 12"><path d="M3.200 1.200C4.300.3 6 .1 7.500.4c1.300-.5 3-.5 4.300.2 1.600.8 2.500 2.500 2.500 4.300v4.600h-1.100V6.800c-.3.300-.7.400-1 .400v3.300c0 .6-.4 1-1 1h-.9c-.3 0-.6-.3-.6-.6V9.200c-.7.200-1.600.2-2.300 0v1.700c0 .3-.3.600-.6.600h-.9c-.6 0-1-.4-1-1V7.800c-.9-.2-1.500-.8-1.800-1.500v2.500c0 .5-.3.800-.7.800S.6 9.300.6 8.800V5.200c0-1.700 1-3.200 2.600-4z" fill="#4b8099"/><circle cx="4.200" cy="4.200" r=".7" fill="#222"/></svg><span>server.php</span></div>
<div class="ti" style="top:551px"><svg style="top:8px" width="15" height="12" viewBox="0 0 15 12"><path d="M3.200 1.200C4.300.3 6 .1 7.500.4c1.300-.5 3-.5 4.300.2 1.600.8 2.500 2.500 2.500 4.300v4.600h-1.100V6.800c-.3.300-.7.400-1 .400v3.300c0 .6-.4 1-1 1h-.9c-.3 0-.6-.3-.6-.6V9.200c-.7.200-1.600.2-2.300 0v1.700c0 .3-.3.600-.6.600h-.9c-.6 0-1-.4-1-1V7.800c-.9-.2-1.500-.8-1.800-1.500v2.500c0 .5-.3.800-.7.800S.6 9.300.6 8.800V5.200c0-1.700 1-3.200 2.600-4z" fill="#4b8099"/><circle cx="4.200" cy="4.200" r=".7" fill="#222"/></svg><span>session.php</span></div>
<div class="ti" style="top:579px"><svg style="top:8px" width="15" height="12" viewBox="0 0 15 12"><path d="M3.200 1.200C4.300.3 6 .1 7.500.4c1.300-.5 3-.5 4.300.2 1.600.8 2.500 2.500 2.500 4.300v4.600h-1.100V6.800c-.3.300-.7.400-1 .400v3.300c0 .6-.4 1-1 1h-.9c-.3 0-.6-.3-.6-.6V9.200c-.7.200-1.600.2-2.300 0v1.700c0 .3-.3.600-.6.600h-.9c-.6 0-1-.4-1-1V7.800c-.9-.2-1.500-.8-1.800-1.500v2.500c0 .5-.3.800-.7.800S.6 9.300.6 8.800V5.200c0-1.700 1-3.200 2.600-4z" fill="#4b8099"/><circle cx="4.200" cy="4.200" r=".7" fill="#222"/></svg><span>static.php</span></div>
<div class="ti" style="top:607px"><svg style="top:8px" width="15" height="12" viewBox="0 0 15 12"><path d="M3.200 1.200C4.300.3 6 .1 7.500.4c1.300-.5 3-.5 4.300.2 1.600.8 2.500 2.500 2.500 4.300v4.600h-1.100V6.800c-.3.300-.7.400-1 .400v3.300c0 .6-.4 1-1 1h-.9c-.3 0-.6-.3-.6-.6V9.200c-.7.200-1.600.2-2.300 0v1.700c0 .3-.3.600-.6.600h-.9c-.6 0-1-.4-1-1V7.800c-.9-.2-1.500-.8-1.800-1.500v2.500c0 .5-.3.800-.7.800S.6 9.300.6 8.800V5.200c0-1.700 1-3.200 2.600-4z" fill="#4b8099"/><circle cx="4.200" cy="4.200" r=".7" fill="#222"/></svg><span>thinkcache.php</span></div>
<div class="ti" style="top:635px"><svg style="top:8px" width="15" height="12" viewBox="0 0 15 12"><path d="M3.200 1.200C4.300.3 6 .1 7.500.4c1.300-.5 3-.5 4.300.2 1.600.8 2.500 2.500 2.500 4.300v4.600h-1.100V6.800c-.3.300-.7.400-1 .400v3.300c0 .6-.4 1-1 1h-.9c-.3 0-.6-.3-.6-.6V9.200c-.7.200-1.600.2-2.300 0v1.700c0 .3-.3.600-.6.600h-.9c-.6 0-1-.4-1-1V7.800c-.9-.2-1.500-.8-1.800-1.500v2.500c0 .5-.3.800-.7.800S.6 9.300.6 8.800V5.200c0-1.700 1-3.200 2.600-4z" fill="#4b8099"/><circle cx="4.200" cy="4.200" r=".7" fill="#222"/></svg><span>translation.php</span></div>
<div class="ti" style="top:663px"><svg style="top:8px" width="15" height="12" viewBox="0 0 15 12"><path d="M3.200 1.200C4.300.3 6 .1 7.500.4c1.300-.5 3-.5 4.300.2 1.600.8 2.500 2.500 2.500 4.300v4.600h-1.100V6.800c-.3.300-.7.400-1 .400v3.300c0 .6-.4 1-1 1h-.9c-.3 0-.6-.3-.6-.6V9.200c-.7.200-1.600.2-2.300 0v1.700c0 .3-.3.600-.6.600h-.9c-.6 0-1-.4-1-1V7.800c-.9-.2-1.500-.8-1.800-1.500v2.500c0 .5-.3.800-.7.800S.6 9.300.6 8.800V5.200c0-1.700 1-3.200 2.600-4z" fill="#4b8099"/><circle cx="4.200" cy="4.200" r=".7" fill="#222"/></svg><span>view.php</span></div>
<div class="sb"></div>
</div>
<div class="abs" id="tabs"><div class="tab"><svg class="abs" style="left:14px;top:14px" width="15" height="12" viewBox="0 0 15 12"><path d="M3.200 1.200C4.300.3 6 .1 7.500.4c1.300-.5 3-.5 4.300.2 1.600.8 2.500 2.500 2.500 4.300v4.600h-1.100V6.800c-.3.300-.7.400-1 .400v3.300c0 .6-.4 1-1 1h-.9c-.3 0-.6-.3-.6-.6V9.200c-.7.200-1.600.2-2.300 0v1.700c0 .3-.3.600-.6.600h-.9c-.6 0-1-.4-1-1V7.800c-.9-.2-1.500-.8-1.800-1.500v2.500c0 .5-.3.800-.7.800S.6 9.300.6 8.800V5.200c0-1.700 1-3.200 2.600-4z" fill="#4b8099"/><circle cx="4.200" cy="4.200" r=".7" fill="#222"/></svg><span class="abs" style="left:39px;top:0">database.php</span><svg class="abs" style="left:147px;top:13px" width="13" height="13" viewBox="0 0 13 13"><path d="M1.500 1.500l10 10M11.500 1.500l-10 10" stroke="#fff" stroke-width="3"/></svg></div></div>
<div class="abs" id="code"><div class="gut"></div><div class="al"></div><div class="gal"></div>
<div class="ln" style="top:0px">1</div>
<div class="cl" style="top:0px">&lt;?php<i>¬</i></div>
<div class="ln" style="top:17px">2</div>
<div class="cl" style="top:17px"><i>¬</i></div>
<div class="ln" style="top:34px">3</div>
<svg class="fold" style="top:41px" viewBox="0 0 7 4"><path d="M0 0h7L3.500 4z" fill="#6b6c66"/></svg>
<div class="cl" style="top:34px"><span class="r">return</span><i>·</i>[<i>¬</i></div>
<div class="ln" style="top:51px">4</div>
<div class="cl" style="top:51px"><i>··</i><span class="s">'default'</span><i>····</i><span class="k">=&gt;</span><i>····</i><span class="s">'mysql'</span>,<i>¬</i></div>
<div class="ln" style="top:68px">5</div>
<div class="cl" style="top:68px"><i>··</i><span class="s">'auto_timestamp'</span><i>··</i><span class="k">=&gt;</span><i>·</i><span class="b">false</span>,<i>¬</i></div>
<div class="ln" style="top:85px">6</div>
<svg class="fold" style="top:92px" viewBox="0 0 7 4"><path d="M0 0h7L3.500 4z" fill="#6b6c66"/></svg>
<div class="cl" style="top:85px"><i>··</i><span class="s">'connections'</span><i>····</i><span class="k">=&gt;</span><i>····</i>[<i>¬</i></div>
<div class="ln" style="top:102px">7</div>
<svg class="fold" style="top:109px" viewBox="0 0 7 4"><path d="M0 0h7L3.500 4z" fill="#6b6c66"/></svg>
<div class="cl" style="top:102px"><u class="g" style="width:30.8px"></u><u style="width:30.8px"></u><span class="s">'mysql'</span><i>···</i><span class="k">=&gt;</span><i>····</i>[<i>¬</i></div>
<div class="ln" style="top:119px">8</div>
<div class="cl" style="top:119px"><u class="g" style="width:30.8px"></u><u class="g" style="width:30.8px"></u><u style="width:30.8px"></u><span class="c">//</span><i>·</i><span class="cj">数据库类型</span><i>¬</i></div>
<div class="ln" style="top:136px">9</div>
<div class="cl" style="top:136px"><u class="g" style="width:30.8px"></u><u class="g" style="width:30.8px"></u><u style="width:30.8px"></u><span class="s">'type'</span><i>········</i><span class="k">=&gt;</span><i>·</i><span class="s">'mysql'</span>,<i>¬</i></div>
<div class="ln" style="top:153px">10</div>
<div class="cl" style="top:153px"><u class="g" style="width:30.8px"></u><u class="g" style="width:30.8px"></u><u style="width:30.8px"></u><span class="c">//</span><i>·</i><span class="cj">服务器地址</span><i>¬</i></div>
<div class="ln" style="top:170px">11</div>
<div class="cl" style="top:170px"><u class="g" style="width:30.8px"></u><u class="g" style="width:30.8px"></u><u style="width:30.8px"></u><span class="s">'hostname'</span><i>····</i><span class="k">=&gt;</span><i>·</i><span class="s">'12345678'</span>,<i>¬</i></div>
<div class="ln" style="top:187px">12</div>
<div class="cl" style="top:187px"><u class="g" style="width:30.8px"></u><u class="g" style="width:30.8px"></u><u style="width:30.8px"></u><span class="c">//</span><i>·</i><span class="cj">数据库名</span><i>¬</i></div>
<div class="ln" style="top:204px">13</div>
<div class="cl" style="top:204px"><u class="g" style="width:30.8px"></u><u class="g" style="width:30.8px"></u><u style="width:30.8px"></u><span class="s">'database'</span><i>····</i><span class="k">=&gt;</span><i>·</i><span class="s">'1234567'</span>,<i>¬</i></div>
<div class="ln" style="top:221px">14</div>
<div class="cl" style="top:221px"><u class="g" style="width:30.8px"></u><u class="g" style="width:30.8px"></u><u style="width:30.8px"></u><span class="c">//</span><i>·</i><span class="cj">数据库用户名</span><i>¬</i></div>
<div class="ln" style="top:238px">15</div>
<div class="cl" style="top:238px"><u class="g" style="width:30.8px"></u><u class="g" style="width:30.8px"></u><u style="width:30.8px"></u><span class="s">'username'</span><i>····</i><span class="k">=&gt;</span><i>·</i><span class="s">'12345678'</span>,<i>¬</i></div>
<div class="ln" style="top:255px">16</div>
<div class="cl" style="top:255px"><u class="g" style="width:30.8px"></u><u class="g" style="width:30.8px"></u><u style="width:30.8px"></u><span class="c">//</span><i>·</i><span class="cj">数据库密码</span><i>¬</i></div>
<div class="ln" style="top:272px">17</div>
<div class="cl" style="top:272px"><u class="g" style="width:30.8px"></u><u class="g" style="width:30.8px"></u><u style="width:30.8px"></u><span class="s">'password'</span><i>····</i><span class="k">=&gt;</span><i>·</i><span class="s">'12345678'</span>,<i>¬</i></div>
<div class="ln" style="top:289px">18</div>
<div class="cl" style="top:289px"><u class="g" style="width:30.8px"></u><u class="g" style="width:30.8px"></u><u style="width:30.8px"></u><span class="c">//</span><i>·</i><span class="cj">数据库连接端口</span><i>¬</i></div>
<div class="ln" style="top:306px">19</div>
<div class="cl" style="top:306px"><u class="g" style="width:30.8px"></u><u class="g" style="width:30.8px"></u><u style="width:30.8px"></u><span class="s">'hostport'</span><i>····</i><span class="k">=&gt;</span><i>·</i><span class="s">'3306'</span>,<i>¬</i></div>
<div class="ln" style="top:323px">20</div>
<div class="cl" style="top:323px"><u class="g" style="width:30.8px"></u><u class="g" style="width:30.8px"></u><u style="width:30.8px"></u><span class="c">//</span><i>·</i><span class="cj">数据库连接参数</span><i>¬</i></div>
<div class="ln" style="top:340px">21</div>
<div class="cl" style="top:340px"><u class="g" style="width:30.8px"></u><u class="g" style="width:30.8px"></u><u style="width:30.8px"></u><span class="s">'params'</span><i>······</i><span class="k">=&gt;</span><i>·</i>[],<i>¬</i></div>
<div class="ln" style="top:357px">22</div>
<div class="cl" style="top:357px"><u class="g" style="width:30.8px"></u><u class="g" style="width:30.8px"></u><u style="width:30.8px"></u><span class="c">//</span><i>·</i><span class="cj">数据库编码默认采用</span><span class="c">utf8</span><i>¬</i></div>
<div class="ln" style="top:374px">23</div>
<div class="cl" style="top:374px"><u class="g" style="width:30.8px"></u><u class="g" style="width:30.8px"></u><u style="width:30.8px"></u><span class="s">'charset'</span><i>·····</i><span class="k">=&gt;</span><i>·</i><span class="s">'utf8'</span>,<i>¬</i></div>
<div class="ln" style="top:391px">24</div>
<div class="cl" style="top:391px"><u class="g" style="width:30.8px"></u><u class="g" style="width:30.8px"></u><u style="width:30.8px"></u><span class="c">//</span><i>·</i><span class="cj">数据库表前缀</span><i>¬</i></div>
<div class="ln" style="top:408px">25</div>
<div class="cl" style="top:408px"><u class="g" style="width:30.8px"></u><u class="g" style="width:30.8px"></u><u style="width:30.8px"></u><span class="s">'prefix'</span><i>······</i><span class="k">=&gt;</span><i>·</i><span class="s">'cd_'</span>,<i>¬</i></div>
<div class="ln" style="top:425px">26</div>
<div class="cl" style="top:425px"><u class="g" style="width:30.8px"></u><u class="g" style="width:30.8px"></u><u style="width:30.8px"></u><span class="c">//</span><i>·</i><span class="cj">是否严格检查字段是否存在</span><i>¬</i></div>
<div class="ln" style="top:442px">27</div>
<div class="cl" style="top:442px"><b class="g">····</b><b class="g">····</b><b>····</b><span class="s">'fields_strict'</span><i>·····</i><span class="k">=&gt;</span><i>·</i><span class="b">false</span>,<i>¬</i></div>
<div class="ln" style="top:459px">28</div>
<div class="cl" style="top:459px"><u class="g" style="width:30.8px"></u><u class="g" style="width:30.8px"></u><u style="width:30.8px"></u><span class="c">//</span><i>·</i><span class="cj">断线重连</span><i>¬</i></div>
<div class="ln" style="top:476px">29</div>
<div class="cl" style="top:476px"><u class="g" style="width:30.8px"></u><u class="g" style="width:30.8px"></u><u style="width:30.8px"></u><span class="s">'break_reconnect'</span><i>·</i><span class="k">=&gt;</span><i>·</i><span class="b">true</span>,<i>¬</i></div>
<div class="ln" style="top:493px">30</div>
<div class="cl" style="top:493px"><u class="g" style="width:30.8px"></u><u class="g" style="width:30.8px"></u><u style="width:30.8px"></u><span class="c">//</span><i>·</i><span class="cj">关闭</span><span class="c">SQL</span><span class="cj">监听日志</span><i>¬</i></div>
<div class="ln" style="top:510px">31</div>
<div class="cl" style="top:510px"><u class="g" style="width:30.8px"></u><u class="g" style="width:30.8px"></u><u style="width:30.8px"></u><span class="s">'trigger_sql'</span><i>·</i><span class="k">=&gt;</span><i>·</i><span class="b">true</span>,<i>¬</i></div>
<div class="ln" style="top:527px">32</div>
<div class="cl" style="top:527px"><u class="g" style="width:30.8px"></u><u style="width:30.8px"></u>]<i>¬</i></div>
<div class="ln" style="top:544px">33</div>
<div class="cl" style="top:544px"><i>··</i>],<i>¬</i></div>
<div class="ln" style="top:561px">34</div>
<div class="cl" style="top:561px">];<i>¬</i></div>
<div class="ln" style="top:578px">35</div>
<div class="cl" style="top:578px"><i>¶</i></div>
<div class="abs" style="left:-1px;top:235px;width:14px;height:50px;background:#222;border:1px solid #555;border-left:none;border-radius:0 14px 14px 0"></div>
<svg class="abs" style="left:1px;top:253px" width="8" height="12" viewBox="0 0 8 12"><path d="M7 1L1.800 6 7 11" fill="none" stroke="#fff" stroke-width="2"/></svg>
</div>
<div class="abs" id="status">
<div class="it" style="left:14px">文件位置:<span style="font-size:14.600px;margin-left:9px">/www/wwwroot/chat.juyun.top/config/database.php</span></div>
<div class="sp" style="left:819px"></div>
<div class="sp" style="left:929px"></div>
<div class="sp" style="left:1007px"></div>
<div class="sp" style="left:1113px"></div>
<div class="sp" style="left:1209px"></div>
<div class="it" style="left:740px">行 1 ,列 0</div>
<div class="it" style="left:835px;word-spacing:5px">历史版本: 无</div>
<div class="it" style="left:944px;word-spacing:5px">空格: 4</div>
<div class="it" style="left:1022px;word-spacing:5px">编码: UTF-8</div>
<div class="it" style="left:1130px;word-spacing:5px">语言: php</div>
</div>
</div>
<svg class="abs" style="left:0;top:0;pointer-events:none" width="1861" height="891" viewBox="0 0 1861 891">
<rect x="195.5" y="15.5" width="508" height="58" fill="none" stroke="#f43636" stroke-width="3"/>
<rect x="12.5" y="105.5" width="144" height="47" fill="none" stroke="#f43636" stroke-width="3"/>
<rect x="15.5" y="111.5" width="139" height="39" fill="none" stroke="#f43636" stroke-width="1"/>
<rect x="228.5" y="411.5" width="146" height="36" fill="none" stroke="#f43636" stroke-width="3"/>
<rect x="765.5" y="410.5" width="237" height="145" fill="none" stroke="#f43636" stroke-width="3"/>
<polygon fill="#f43636" points="115,170.500 128.300,181 124.700,182.200 177.600,303 119.300,185 115.400,187.600"/>
<polygon fill="#f43636" points="271.200,410.500 259.200,399.400 263,397.400 205.200,214 269.700,396.200 274.100,395"/>
<polygon fill="#f43636" points="1075.800,580.300 1095,583 1092,586.700 1272.500,720 1088,592.700 1084.800,595.600"/>
</svg>
<div class="abs" style="left:1621px;top:859px;height:28px;line-height:28px;color:#111;white-space:nowrap;font-size:20.500px">搞钱情报局<span style="display:inline-block;width:27px;text-align:center;font-weight:bold;font-size:26px;line-height:20px;position:relative;top:-1px;left:-2px">·</span><span style="font-size:22.300px;position:relative;left:-1px">gqqbj.vip</span></div>
<div class="abs" style="left:1765px;top:881px;width:96px;height:10px;background:#2e2e2e;background-image:radial-gradient(#3c3c3c 0.6px,transparent 0.8px);background-size:3px 3px"></div>
</body>
</html>
